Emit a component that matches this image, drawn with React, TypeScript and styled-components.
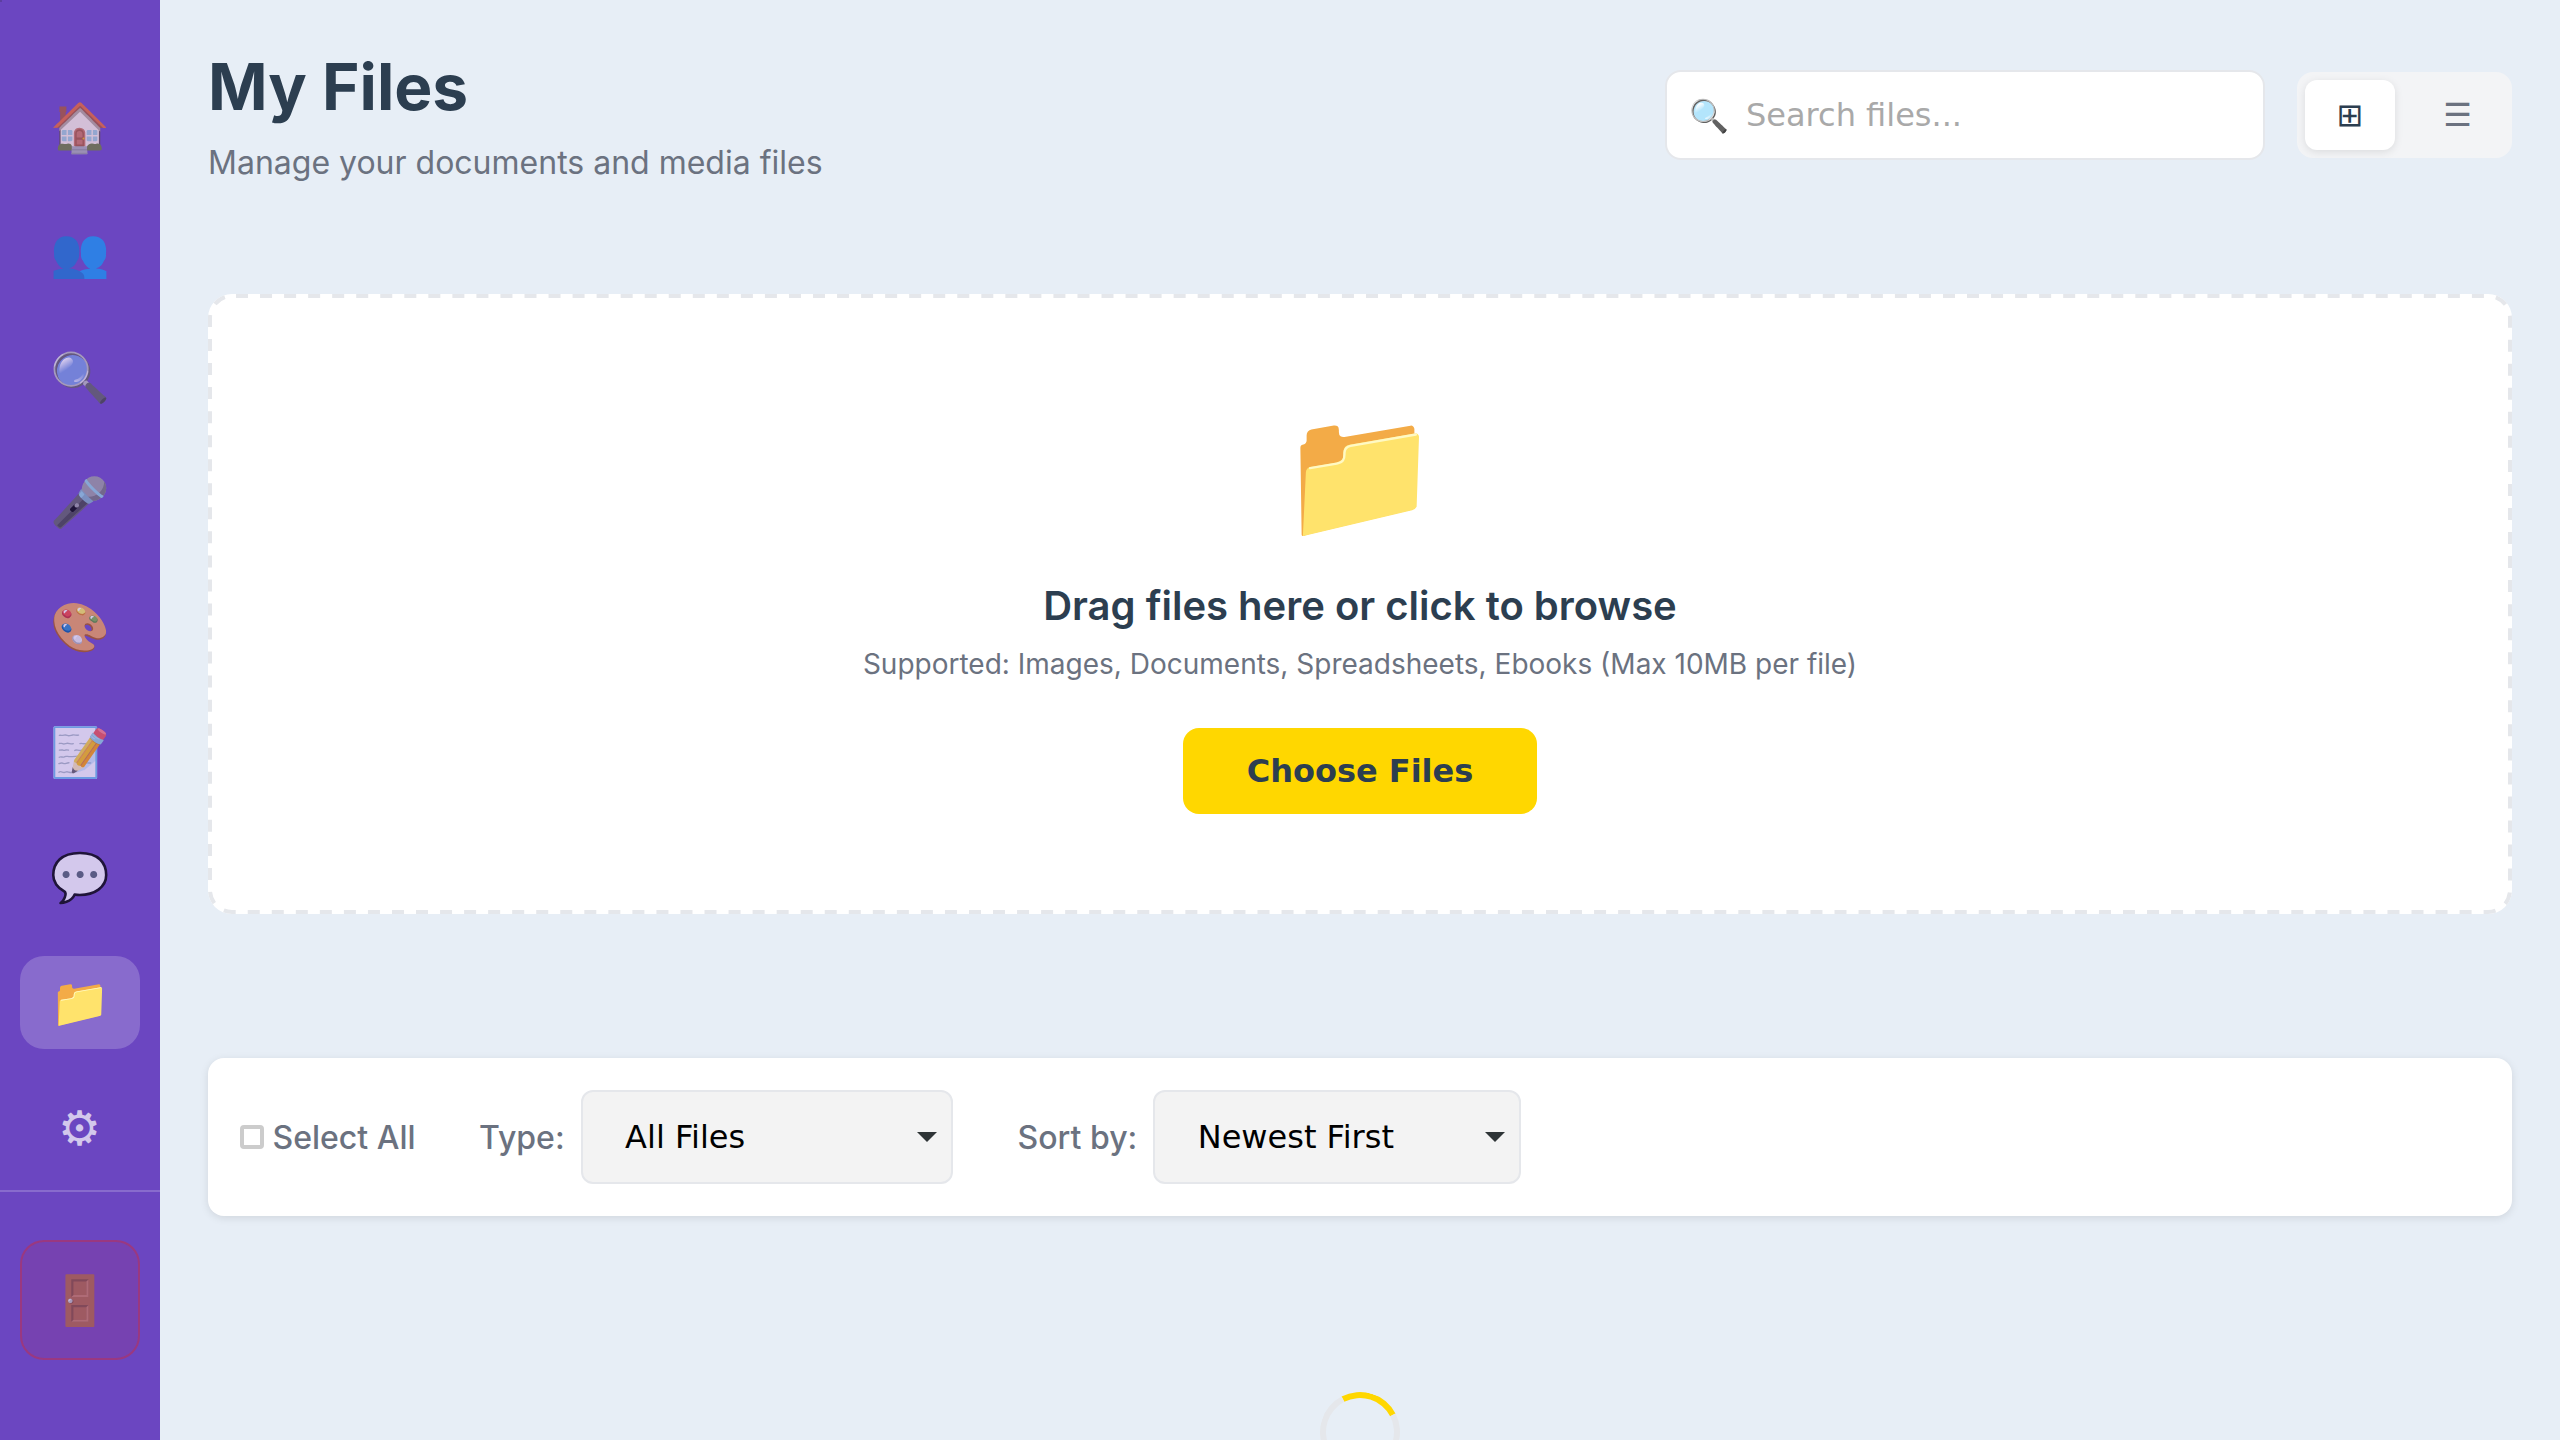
import React from 'react';
import styled, { createGlobalStyle } from 'styled-components';

const GlobalStyle = createGlobalStyle`
  *, *::before, *::after { box-sizing: border-box; }
  body {
    margin: 0;
    overflow: hidden;
    background: #e7eef6;
    font-family: Inter, "Liberation Sans", sans-serif;
    color: #2c3e50;
  }
  h1, h2, p { margin: 0; }
`;

const controlFont = '"DejaVu Sans", sans-serif';

const Layout = styled.div`
  display: flex;
  height: 1440px;
  overflow: hidden;
`;

const Sidebar = styled.aside`
  position: relative;
  width: 160px;
  flex: none;
  display: flex;
  flex-direction: column;
  background: #6b46c1;
`;

const CornerMark = styled.span`
  position: absolute;
  top: 0;
  left: 0;
  width: 2px;
  height: 2px;
  background: #5c3fa0;
`;

const Nav = styled.nav`
  height: 1190px;
  padding: 81px 20px 0;
  display: flex;
  flex-direction: column;
  gap: 32px;
`;

const NavItem = styled.a<{ $active?: boolean }>`
  height: 93px;
  flex: none;
  display: flex;
  align-items: center;
  justify-content: center;
  padding-bottom: 2px;
  border-radius: 24px;
  font-size: 48px;
  line-height: 1;
  color: #fff;
  background: ${(p) => (p.$active ? 'rgba(255, 255, 255, 0.2)' : 'transparent')};
  span { opacity: ${(p) => (p.$active ? 1 : 0.7)}; }
  &:last-child { padding: 0 1px 0 0; }
`;

const SidebarFooter = styled.div`
  border-top: 2px solid rgba(255, 255, 255, 0.2);
  padding: 48px 20px 0;
`;

const Logout = styled.button`
  width: 120px;
  height: 120px;
  padding: 0;
  display: flex;
  align-items: center;
  justify-content: center;
  border: 2px solid rgba(220, 38, 38, 0.35);
  border-radius: 24px;
  background: rgba(220, 38, 38, 0.1);
  font: 48px/1 Inter, sans-serif;
  span { opacity: 0.7; }
`;

const Main = styled.main`
  flex: 1;
  min-width: 0;
  padding: 48px 48px 0;
  display: flex;
  flex-direction: column;
`;

const Header = styled.header`
  height: 246px;
  flex: none;
  display: flex;
  justify-content: space-between;
  align-items: flex-start;
`;

const Title = styled.h1`
  font-size: 64px;
  line-height: 77px;
  font-weight: 700;
`;

const Subtitle = styled.p`
  margin-top: 18px;
  font-size: 32px;
  line-height: 40px;
  color: #6b7280;
`;

const Tools = styled.div`
  display: flex;
  align-items: center;
  gap: 32px;
  padding-top: 22px;
`;

const SearchBox = styled.label`
  width: 600px;
  height: 90px;
  display: flex;
  align-items: center;
  gap: 17px;
  padding: 0 22px;
  background: #fff;
  border: 2px solid #e5e7eb;
  border-radius: 16px;
  font-size: 32px;
`;

const SearchInput = styled.input`
  flex: 1;
  min-width: 0;
  padding: 0;
  border: 0;
  outline: 0;
  background: transparent;
  font: 32px ${controlFont};
  &::placeholder { color: #a9a9a9; opacity: 1; }
`;

const Toggle = styled.div`
  height: 86px;
  display: flex;
  gap: 16px;
  padding: 8px;
  background: #f3f4f6;
  border-radius: 16px;
`;

const ToggleButton = styled.button<{ $active?: boolean }>`
  width: ${(p) => (p.$active ? 90 : 93)}px;
  height: 70px;
  padding: 0;
  border: 0;
  border-radius: 12px;
  font: 32px ${controlFont};
  color: ${(p) => (p.$active ? '#2c3e50' : '#6b7280')};
  background: ${(p) => (p.$active ? '#fff' : 'transparent')};
  box-shadow: ${(p) => (p.$active ? '0 2px 8px rgba(0, 0, 0, 0.1)' : 'none')};
`;

const DropZone = styled.section`
  position: relative;
  height: 620px;
  flex: none;
  display: flex;
  flex-direction: column;
  align-items: center;
  padding-top: 98px;
  background: #fff;
  border-radius: 24px;
`;

const DashedOutline = styled.svg`
  position: absolute;
  inset: 0;
  width: 2304px;
  height: 620px;
  fill: none;
  stroke: #e5e7eb;
  stroke-width: 4px;
  stroke-dasharray: 12 12.042;
  stroke-dashoffset: -4px;
`;

const DropIcon = styled.div`
  height: 160px;
  padding-right: 2px;
  font-size: 128px;
  line-height: 160px;
`;

const DropTitle = styled.h2`
  margin-top: 30px;
  font-size: 40px;
  line-height: 48px;
  font-weight: 600;
`;

const DropHint = styled.p`
  margin-top: 16px;
  font-size: 28px;
  line-height: 36px;
  color: #6b7280;
`;

const ChooseButton = styled.button`
  width: 354px;
  height: 86px;
  margin-top: 46px;
  padding: 0;
  border: 0;
  border-radius: 16px;
  background: #ffd700;
  color: #2c3e50;
  font: bold 32px ${controlFont};
`;

const FilterBar = styled.section`
  height: 158px;
  flex: none;
  margin-top: 144px;
  padding: 0 32px;
  display: flex;
  align-items: center;
  background: #fff;
  border-radius: 16px;
  box-shadow: 0 2px 8px rgba(0, 0, 0, 0.1);
  font-size: 32px;
  font-weight: 500;
  color: #6b7280;
`;

const SelectAll = styled.label`
  display: flex;
  align-items: center;
  gap: 8.5px;
  margin-right: 63.5px;
`;

const CheckBox = styled.span`
  width: 24px;
  height: 24px;
  border: 4px solid #ccc;
  border-radius: 4px;
  background: #fff;
`;

const FilterGroup = styled.div`
  display: flex;
  align-items: center;
  gap: 16px;
  margin-right: 65px;
`;

const SelectBox = styled.div<{ $width: number }>`
  width: ${(p) => p.$width}px;
  height: 94px;
  display: flex;
  align-items: center;
  justify-content: space-between;
  padding: 0 14px 0 42.5px;
  border: 2px solid #e5e7eb;
  border-radius: 12px;
  background: #f3f3f3;
  color: #000;
  font: 32px ${controlFont};
`;

const Arrow = styled.svg`
  width: 20px;
  height: 10px;
  fill: #2e3436;
`;

const LoadingArea = styled.div`
  display: flex;
  justify-content: center;
  padding-top: 176px;
`;

const Spinner = styled.div`
  width: 80px;
  height: 80px;
  flex: none;
  border: 6px solid #e5e7eb;
  border-top-color: #ffd700;
  border-radius: 50%;
  transform: rotate(17.5deg);
`;

const navIcons = ['🏠', '👥', '🔍', '🎤', '🎨', '📝', '💬', '📁', '⚙'];

function Select({ label, value, width }: { label: string; value: string; width: number }) {
  return (
    <FilterGroup>
      <span>{label}</span>
      <SelectBox $width={width}>
        <span>{value}</span>
        <Arrow viewBox="0 0 20 10"><path d="M0 0h20L10 10z" /></Arrow>
      </SelectBox>
    </FilterGroup>
  );
}

export default function App() {
  return (
    <>
      <GlobalStyle />
      <Layout>
        <Sidebar>
          <CornerMark />
          <Nav>
            {navIcons.map((icon) => (
              <NavItem key={icon} $active={icon === '📁'}><span>{icon}</span></NavItem>
            ))}
          </Nav>
          <SidebarFooter>
            <Logout><span>🚪</span></Logout>
          </SidebarFooter>
        </Sidebar>
        <Main>
          <Header>
            <div>
              <Title>My Files</Title>
              <Subtitle>Manage your documents and media files</Subtitle>
            </div>
            <Tools>
              <SearchBox>
                <span>🔍</span>
                <SearchInput placeholder="Search files..." />
              </SearchBox>
              <Toggle>
                <ToggleButton $active>⊞</ToggleButton>
                <ToggleButton>☰</ToggleButton>
              </Toggle>
            </Tools>
          </Header>
          <DropZone>
            <DashedOutline viewBox="0 0 2304 620">
              <rect x="2" y="2" width="2300" height="616" rx="22" />
            </DashedOutline>
            <DropIcon>📁</DropIcon>
            <DropTitle>Drag files here or click to browse</DropTitle>
            <DropHint>Supported: Images, Documents, Spreadsheets, Ebooks (Max 10MB per file)</DropHint>
            <ChooseButton>Choose Files</ChooseButton>
          </DropZone>
          <FilterBar>
            <SelectAll><CheckBox />Select All</SelectAll>
            <Select label="Type:" value="All Files" width={372} />
            <Select label="Sort by:" value="Newest First" width={368} />
          </FilterBar>
          <LoadingArea><Spinner /></LoadingArea>
        </Main>
      </Layout>
    </>
  );
}
